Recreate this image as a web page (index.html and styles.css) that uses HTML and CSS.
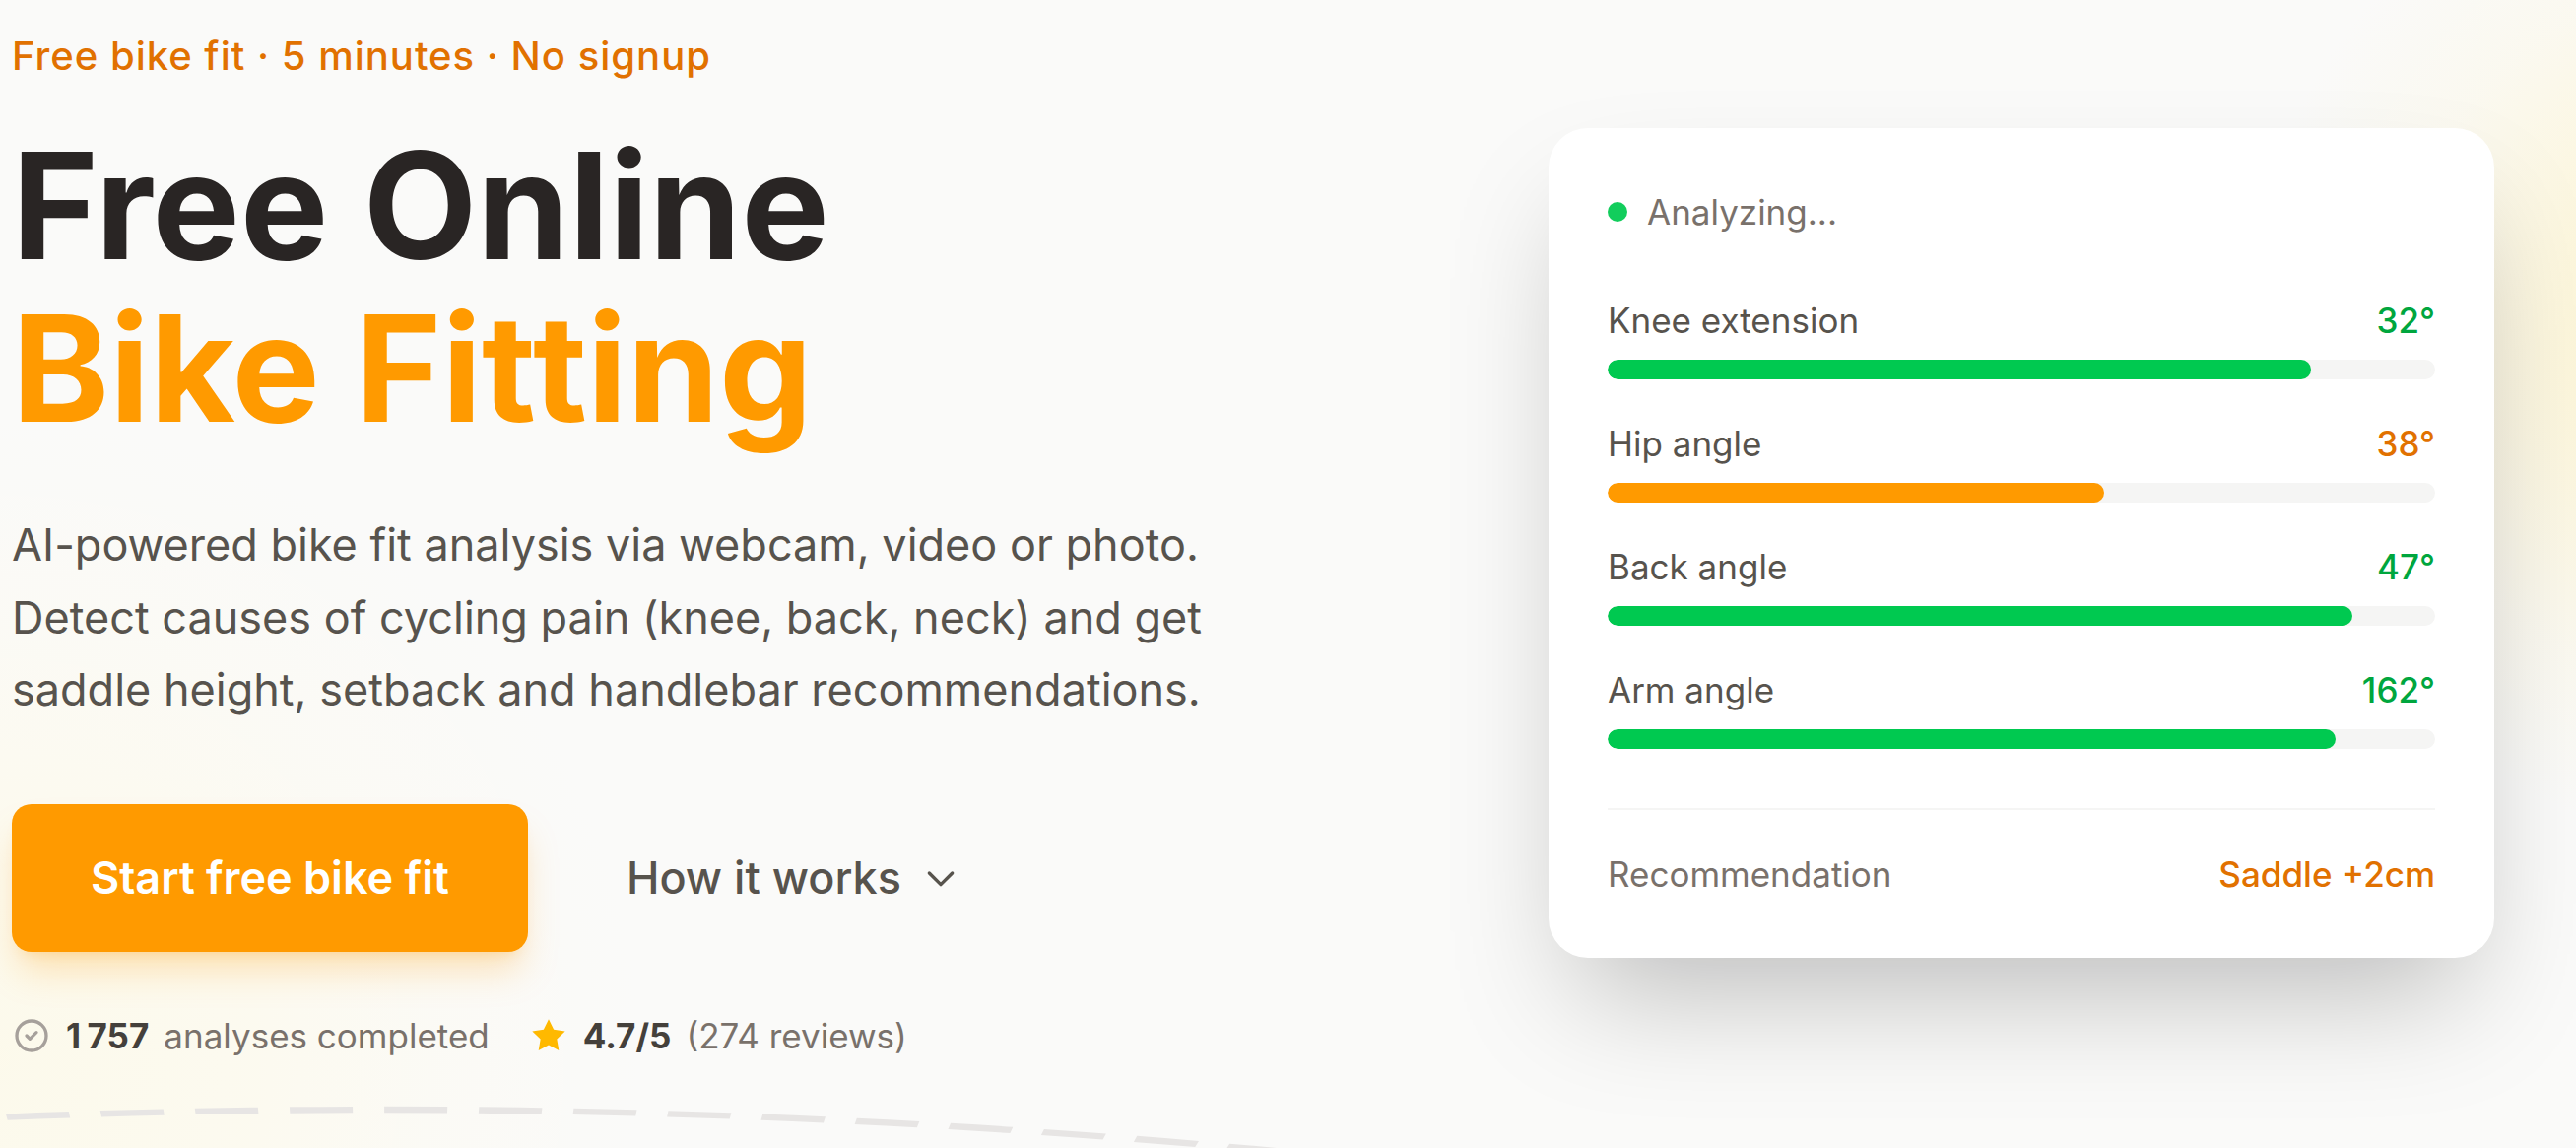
FILE: index.html
```html
<!DOCTYPE html>
<html lang="en">
<head>
    <meta charset="UTF-8">
    <meta name="viewport" content="width=device-width, initial-scale=1.0">
    <title>Free Online Bike Fitting</title>
    <link rel="stylesheet" href="styles.css">
</head>
<body>
    <section class="hero">
        <div class="glow glow-left"></div>
        <div class="glow glow-right"></div>
        <svg class="road" viewBox="0 0 326.875 20" preserveAspectRatio="none" fill="none" aria-hidden="true">
            <path d="M0.85 9.52Q87.9 0.37 175 24.5" stroke="#e7e5e4" stroke-width="2.1" stroke-dasharray="8 4"/>
        </svg>

        <div class="hero-text">
            <p class="eyebrow">Free bike fit · 5 minutes · No signup</p>
            <h1>Free Online<br><span class="accent">Bike Fi<span class="kern">t</span>ting</span></h1>
            <p class="lead">AI-powered bike fit analysis via webcam, video or photo.<br>Detect causes of cycling pain (knee, back, neck) and get<br>saddle height, setback and handlebar recommendations.</p>

            <div class="actions">
                <a class="btn btn-primary" href="#start">Start free bike fit</a>
                <a class="btn btn-link" href="#how">
                    How it works
                    <svg class="icon" viewBox="0 0 24 24" fill="none" stroke="currentColor" stroke-width="2" stroke-linecap="round" stroke-linejoin="round"><path d="M19 9l-7 7-7-7"/></svg>
                </a>
            </div>

            <div class="stats">
                <div class="stat">
                    <svg class="icon icon-check" viewBox="0 0 24 24" fill="none" stroke="currentColor" stroke-width="2" stroke-linecap="round" stroke-linejoin="round"><path d="M9 12l2 2 4-4m6 2a9 9 0 11-18 0 9 9 0 0118 0z"/></svg>
                    <strong>1<span class="thin">&#8239;</span>757</strong>
                    <span>analyses completed</span>
                </div>
                <div class="stat">
                    <svg class="icon icon-star" viewBox="0 0 24 24" fill="currentColor"><path d="M12 2l3.09 6.26L22 9.27l-5 4.87 1.18 6.88L12 17.77l-6.18 3.25L7 14.14 2 9.27l6.91-1.01L12 2z"/></svg>
                    <strong>4.7/5</strong>
                    <span>(274 reviews)</span>
                </div>
            </div>
        </div>

        <div class="card">
            <div class="status"><span class="dot"></span>Analyzing...</div>

            <div class="metrics">
                <div class="metric">
                    <div class="row"><span>Knee extension</span><span class="value good">32°</span></div>
                    <div class="bar"><div class="fill" style="width: 85%"></div></div>
                </div>
                <div class="metric">
                    <div class="row"><span>Hip angle</span><span class="value warn">38°</span></div>
                    <div class="bar"><div class="fill fill-warn" style="width: 60%"></div></div>
                </div>
                <div class="metric">
                    <div class="row"><span>Back angle</span><span class="value good">47°</span></div>
                    <div class="bar"><div class="fill" style="width: 90%"></div></div>
                </div>
                <div class="metric">
                    <div class="row"><span>Arm angle</span><span class="value good">162°</span></div>
                    <div class="bar"><div class="fill" style="width: 88%"></div></div>
                </div>
            </div>

            <div class="row recommendation"><span>Recommendation</span><span class="value warn">Saddle +2cm</span></div>
        </div>
    </section>
</body>
</html>
```

FILE: styles.css
```css
* {
    box-sizing: border-box;
    margin: 0;
    padding: 0;
}
body {
    font-family: Inter, "Liberation Sans", sans-serif;
    background: #fafaf9;
    color: #292524;
    overflow: hidden;
}
.hero {
    position: relative;
    display: flex;
    justify-content: space-between;
    align-items: flex-start;
    height: 1165px;
    padding: 26.5px 83px 0 12px;
    overflow: hidden;
}
.hero-text,
.card {
    position: relative;
}

/* background */
.glow {
    position: absolute;
    border-radius: 50%;
}
.glow-left {
    left: -650px;
    bottom: -560px;
    width: 1300px;
    height: 1300px;
    background: radial-gradient(closest-side, rgba(255, 249, 222, 0.5), rgba(255, 250, 228, 0.45) 40%, rgba(255, 251, 235, 0.25) 70%, rgba(255, 251, 235, 0));
}
.glow-right {
    right: -705px;
    top: -180px;
    width: 1040px;
    height: 1040px;
    background: radial-gradient(closest-side, rgba(254, 243, 198, 0.75), rgba(254, 243, 198, 0.6) 35%, rgba(254, 243, 198, 0.18) 72%, rgba(254, 243, 198, 0));
}
.road {
    position: absolute;
    left: 0;
    bottom: 0;
    width: 100%;
    height: 60px;
}

/* left column */
.eyebrow {
    font-size: 40px;
    line-height: 60px;
    font-weight: 500;
    letter-spacing: 0.025em;
    color: #e17100;
    margin-bottom: 39.5px;
}
h1 {
    font-size: 150px;
    line-height: 1.1;
    font-weight: 700;
    margin-bottom: 60.4px;
}
.accent {
    color: #ff9a00;
}
.kern {
    margin-right: -3px;
}
.lead {
    font-size: 45px;
    line-height: 1.625;
    color: #57534d;
    margin-bottom: 80px;
}
.actions {
    display: flex;
    gap: 40px;
    margin-bottom: 60px;
}
.btn {
    display: flex;
    align-items: center;
    gap: 20px;
    height: 150px;
    font-size: 45px;
    text-decoration: none;
    border-radius: 20px;
}
.btn-primary {
    padding: 0 80px;
    font-weight: 600;
    color: #fff;
    background: #ff9a00;
    box-shadow: 0 25px 37.5px -7.5px rgba(254, 154, 0, 0.25), 0 10px 15px -10px rgba(254, 154, 0, 0.25);
}
.btn-link {
    padding: 0 60px;
    font-weight: 500;
    color: #57534d;
}
.icon {
    width: 40px;
    height: 40px;
    flex-shrink: 0;
}
.stats {
    display: flex;
    gap: 40px;
    font-size: 35px;
    line-height: 50px;
    color: #79716b;
}
.stat {
    display: flex;
    align-items: center;
    gap: 15px;
}
.stat strong {
    font-weight: 700;
    color: #44403b;
}
.thin {
    margin-right: 1px;
}
.icon-check {
    color: #a6a09b;
}
.icon-star {
    color: #ffb900;
}

/* analysis card */
.card {
    width: 960px;
    margin-top: 103.5px;
    padding: 60px;
    background: #fff;
    border-radius: 40px;
    box-shadow: 0 62.5px 125px -30px rgba(0, 0, 0, 0.25);
    font-size: 35px;
    line-height: 50px;
    color: #57534d;
}
.status {
    display: flex;
    align-items: center;
    gap: 20px;
    margin-bottom: 60px;
    color: #79716b;
}
.dot {
    width: 20px;
    height: 20px;
    border-radius: 50%;
    background: #00c950;
    opacity: 0.93;
}
.metrics {
    display: flex;
    flex-direction: column;
    gap: 40px;
}
.row {
    display: flex;
    justify-content: space-between;
}
.value {
    font-weight: 500;
}
.good {
    color: #00a63e;
}
.warn {
    color: #e17100;
}
.bar {
    height: 20px;
    margin-top: 15px;
    background: #f5f5f4;
    border-radius: 10px;
    overflow: hidden;
}
.fill {
    height: 100%;
    background: #00c950;
    border-radius: 10px;
}
.fill-warn {
    background: #ff9a00;
}
.recommendation {
    margin-top: 60px;
    padding-top: 40px;
    border-top: 2px solid #f5f5f4;
    color: #79716b;
}
```
